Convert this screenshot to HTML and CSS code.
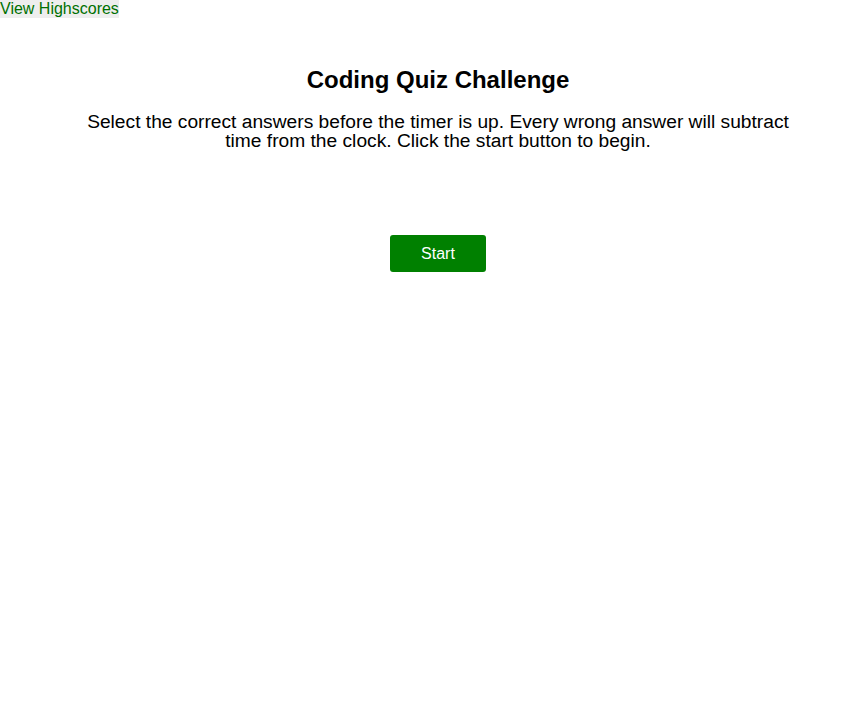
FILE: index.html
```html
<!DOCTYPE html>
<html>
<head>
<meta charset="utf-8">
<link rel="stylesheet" href="styles.css">
</head>
<body>
<header class="top">
  <a class="scores" href="#">View Highscores</a>
</header>
<main class="quiz">
  <h1 class="title">Coding Quiz Challenge</h1>
  <p class="intro">Select the correct answers before the timer is up. Every wrong answer will subtract time from the clock. Click the start button to begin.</p>
  <button class="start">Start</button>
</main>
</body>
</html>
```
FILE: styles.css
```css
html, body {
  margin: 0;
  padding: 0;
  background: #fff;
  font-family: "Liberation Sans", Arial, sans-serif;
}
.top {
  display: flex;
  height: 18px;
}
.scores {
  display: block;
  background: #eeeeee;
  color: #007000;
  text-decoration: none;
  font-size: 16px;
  line-height: 18px;
}
.quiz {
  display: flex;
  flex-direction: column;
  align-items: center;
  padding-left: 27px;
  padding-top: 48px;
}
.title {
  margin: 0;
  font-size: 24px;
  line-height: 28px;
  font-weight: bold;
}
.intro {
  margin: 18px 0 0;
  width: 720px;
  text-align: center;
  font-size: 19.2px;
  line-height: 19px;
}
.start {
  margin-top: 85px;
  width: 96px;
  height: 37px;
  background: #008000;
  color: #fff;
  border: none;
  border-radius: 3px;
  font-family: "Liberation Sans", Arial, sans-serif;
  font-size: 16px;
}
```
